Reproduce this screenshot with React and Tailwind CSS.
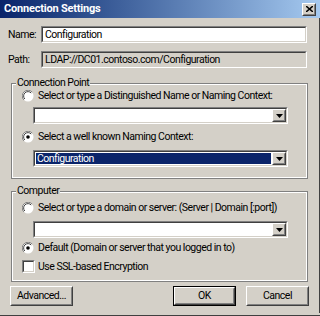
import React from "react";

const font = { fontFamily: "Roboto, 'Liberation Sans', Arial, sans-serif" };

function Sunken({ className = "", children }) {
  // classic 2px sunken edge
  return (
    <div
      className={`border border-t-[#808080] border-l-[#808080] border-r-white border-b-white ${className}`}
    >
      <div className="h-full border border-t-[#404040] border-l-[#404040] border-r-[#d4d0c8] border-b-[#d4d0c8]">
        {children}
      </div>
    </div>
  );
}

function Raised({ className = "", children }) {
  return (
    <div
      className={`border border-t-white border-l-white border-r-[#404040] border-b-[#404040] bg-[#d4d0c8] ${className}`}
    >
      <div className="h-full border border-t-[#d4d0c8] border-l-[#d4d0c8] border-r-[#808080] border-b-[#808080] flex items-center justify-center">
        {children}
      </div>
    </div>
  );
}

function Combo({ selected, text }) {
  return (
    <Sunken className="w-[255px] h-[17px] ml-[20px]">
      <div className="flex h-full bg-white">
        <div className="flex-1 p-[1px]">
          <div
            className={`h-full flex items-center pl-[1px] ${
              selected ? "bg-[#0a246a] text-white" : ""
            }`}
          >
            {text}
          </div>
        </div>
        <Raised className="w-[14px] h-full">
          <svg width="7" height="4" viewBox="0 0 7 4">
            <path d="M0 0h7L3.5 4z" fill="#000" />
          </svg>
        </Raised>
      </div>
    </Sunken>
  );
}

function Radio({ checked }) {
  return (
    <svg width="12" height="12" viewBox="0 0 12 12" className="shrink-0">
      <circle cx="6" cy="6" r="5.5" fill="#fff" />
      <path d="M10.2 2.1A5.5 5.5 0 0 0 1.8 9.9" stroke="#808080" fill="none" />
      <path d="M9.2 3A4.3 4.3 0 0 0 2.8 9" stroke="#404040" fill="none" />
      {checked && <circle cx="6" cy="6" r="1.8" fill="#000" />}
    </svg>
  );
}

function RadioRow({ checked, children, className = "" }) {
  return (
    <div className={`flex items-center gap-[4px] ml-[9px] h-[14px] ${className}`}>
      <Radio checked={checked} />
      <span className="whitespace-nowrap">{children}</span>
    </div>
  );
}

function Group({ label, className = "", children }) {
  return (
    <div className={`relative ml-[11px] w-[297px] ${className}`}>
      <div className="border border-[#808080] h-full">
        <div className="border border-white h-full pt-[4px]">{children}</div>
      </div>
      <span className="absolute left-[5px] -top-[6px] bg-[#d4d0c8] px-[1px] leading-[12px]">
        {label}
      </span>
    </div>
  );
}

function Button({ className = "", children, isDefault }) {
  const inner = (
    <Raised className={isDefault ? "w-full h-full" : `w-[63px] h-[20px] ${className}`}>
      <span>{children}</span>
    </Raised>
  );
  if (!isDefault) return inner;
  return (
    <div className={`w-[63px] h-[20px] border border-black ${className}`}>{inner}</div>
  );
}

export default function App() {
  return (
    <div
      className="w-[320px] h-[316px] bg-[#d4d0c8] text-[10.5px] tracking-[-0.5px] text-black overflow-hidden relative"
      style={font}
    >
      {/* Title bar */}
      <div className="h-[18px] bg-gradient-to-r from-[#0a246a] to-[#a6caf0] flex items-center justify-between pl-[4px] pr-[4px]">
        <span className="text-white font-bold text-[11px] tracking-[-0.2px]">
          Connection Settings
        </span>
        <Raised className="w-[14px] h-[13px]">
          <svg width="7" height="6" viewBox="0 0 7 6">
            <path d="M0 0l7 6M7 0L0 6" stroke="#000" strokeWidth="1.5" />
          </svg>
        </Raised>
      </div>

      {/* Name / Path */}
      <div className="flex items-center mt-[8px] pl-[8px]">
        <span className="w-[33px]">Name:</span>
        <Sunken className="w-[266px] h-[17px]">
          <div className="bg-white h-full flex items-center pl-[2px]">Configuration</div>
        </Sunken>
      </div>
      <div className="flex items-center mt-[8px] pl-[8px]">
        <span className="w-[33px]">Path:</span>
        <Sunken className="w-[266px] h-[17px]">
          <div className="h-full flex items-center pl-[2px]">
            LDAP://DC01.contoso.com/Configuration
          </div>
        </Sunken>
      </div>

      {/* Connection Point */}
      <Group label="Connection Point" className="mt-[15px] h-[96px]">
        <RadioRow>Select or type a Distinguished Name or Naming Context:</RadioRow>
        <div className="mt-[4px]">
          <Combo text="" />
        </div>
        <RadioRow checked className="mt-[6px]">
          Select a well known Naming Context:
        </RadioRow>
        <div className="mt-[6px]">
          <Combo selected text="Configuration" />
        </div>
      </Group>

      {/* Computer */}
      <Group label="Computer" className="mt-[12px] h-[91px]">
        <RadioRow className="mt-[4px]">
          Select or type a domain or server: (Server | Domain [:port])
        </RadioRow>
        <div className="mt-[6px]">
          <Combo text="" />
        </div>
        <RadioRow checked className="mt-[3px]">
          Default (Domain or server that you logged in to)
        </RadioRow>
        <div className="flex items-center gap-[3px] ml-[9px] mt-[5px] h-[13px]">
          <Sunken className="w-[13px] h-[13px]">
            <div className="bg-white h-full" />
          </Sunken>
          <span>Use SSL-based Encryption</span>
        </div>
      </Group>

      {/* Buttons */}
      <div className="flex mt-[4px] pl-[10px]">
        <Button>Advanced...</Button>
        <div className="flex-1" />
        <Button isDefault>OK</Button>
        <Button className="ml-[10px] mr-[11px]">Cancel</Button>
      </div>

      {/* window frame right / bottom */}
      <div className="absolute right-0 top-[18px] bottom-0 w-[4px] border-l border-l-[#d4d0c8] border-r border-r-[#404040] bg-[#d4d0c8]" />
      <div className="absolute left-0 right-0 bottom-0 h-[3px] border-b border-b-[#404040] bg-[#d4d0c8]" />
    </div>
  );
}
